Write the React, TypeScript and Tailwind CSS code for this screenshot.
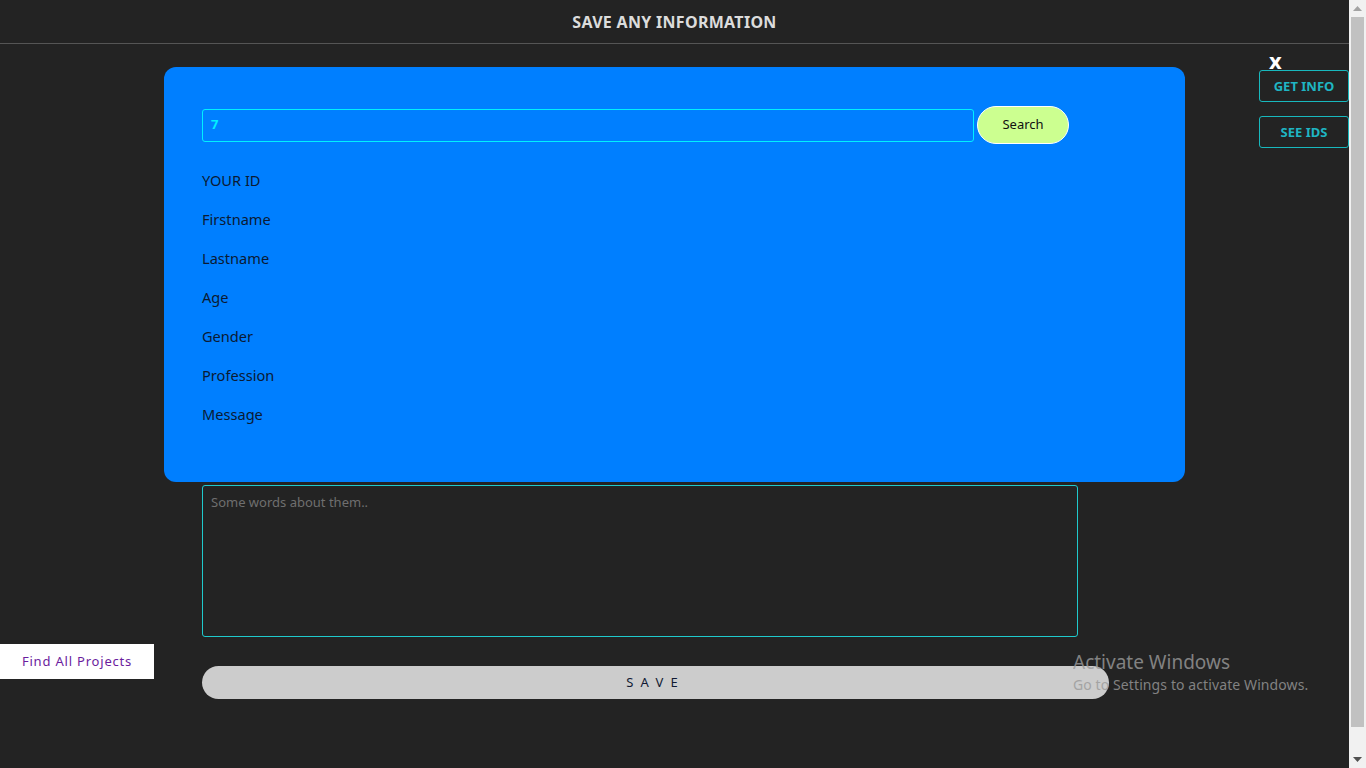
import React from "react";

export default function App() {
  const labels = ["YOUR ID", "Firstname", "Lastname", "Age", "Gender", "Profession", "Message"];
  return (
    <div className="flex h-[768px] w-[1366px] overflow-hidden bg-[#232323]" style={{ fontFamily: '"Noto Sans", "Open Sans", sans-serif' }}>
      <div className="relative flex w-[1349px] flex-col">
        <header className="flex h-[44px] items-center justify-center border-b border-[#555555]">
          <h1 className="mt-[1px] text-[16px] font-bold tracking-[0.3px] text-[#dcdcdc]">SAVE ANY INFORMATION</h1>
        </header>

        <div className="flex items-start">
          <div className="ml-[164px] mt-[23px] flex h-[415px] w-[1021px] flex-col rounded-[12px] bg-[#007fff] pl-[38px] pt-[39px]">
            <div className="flex items-center gap-[3px]">
              <div className="flex h-[33px] w-[772px] items-center rounded-[3px] border border-[#00f0ff] pl-[8px] text-[13px] font-bold text-[#00f0ff]">
                7
              </div>
              <button className="flex h-[38px] w-[92px] items-center justify-center rounded-full border border-white bg-[#ccff90] text-[13px] text-[#111]">
                Search
              </button>
            </div>
            <div className="mt-[17px] flex flex-col">
              {labels.map((l) => (
                <div key={l} className="flex h-[39px] items-center text-[14.6px] text-[#0b1a33]">
                  {l}
                </div>
              ))}
            </div>
          </div>

          <div className="ml-auto mt-[8px] flex w-[90px] flex-col items-start">
            <span className="ml-[10px] text-[22px] font-bold leading-[16px] text-white">x</span>
            <button className="mt-[2px] h-[32px] w-[90px] rounded-[3px] border border-[#18b8bd] pt-[2px] text-[13px] font-bold text-[#1fb5c2]">
              GET INFO
            </button>
            <button className="mt-[14px] h-[32px] w-[90px] rounded-[3px] border border-[#18b8bd] pt-[2px] text-[13px] font-bold text-[#1fb5c2]">
              SEE IDS
            </button>
          </div>
        </div>

        <div className="ml-[202px] mt-[3px] h-[152px] w-[876px] rounded-[3px] border border-[#1fc9cc] px-[8px] pt-[7px] text-[13px] text-[#6f6f6f]">
          Some words about them..
        </div>

        <button className="ml-[202px] mt-[29px] flex h-[33px] w-[907px] items-center justify-center rounded-full bg-[#cccccc] pt-[1px] text-[13px] tracking-[0.55em] text-[#111a33]">
          SAVE
        </button>

        <div className="absolute left-0 top-[644px] flex h-[35px] w-[154px] items-center justify-center bg-white pt-[1px] text-[13px] tracking-[0.8px] text-[#6b1d9e]">
          Find All Projects
        </div>

        <div className="pointer-events-none absolute left-[1073px] top-[649px] flex flex-col text-[#9a9a9a] opacity-80">
          <span className="text-[19px] leading-[26px]">Activate Windows</span>
          <span className="text-[14px] leading-[20px] tracking-[0.1px]">Go to Settings to activate Windows.</span>
        </div>
      </div>

      <div className="flex w-[17px] flex-col items-center bg-[#f1f1f1]">
        <div className="flex h-[17px] items-center justify-center">
          <svg width="9" height="5" viewBox="0 0 9 5"><path d="M0 5 L4.5 0 L9 5 Z" fill="#a3a3a3" /></svg>
        </div>
        <div className="w-[13px] flex-1 bg-[#c1c1c1]" />
        <div className="h-[24px]" />
        <div className="flex h-[17px] items-center justify-center">
          <svg width="9" height="5" viewBox="0 0 9 5"><path d="M0 0 L4.5 5 L9 0 Z" fill="#505050" /></svg>
        </div>
      </div>
    </div>
  );
}
